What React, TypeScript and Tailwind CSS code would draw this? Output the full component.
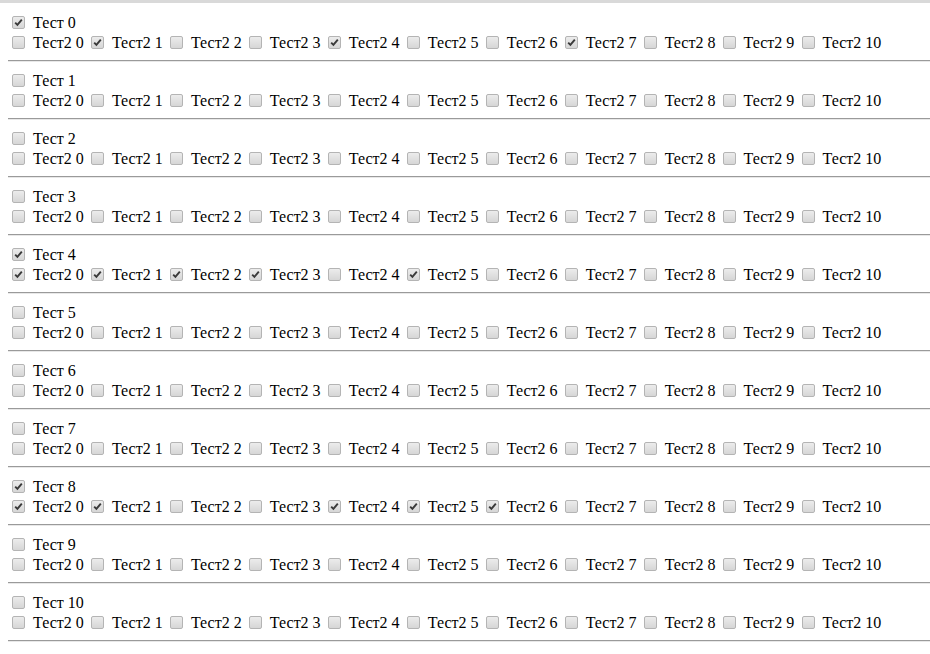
const GROUPS = Array.from({ length: 11 }, (_, i) => i);
const SUBS = Array.from({ length: 11 }, (_, i) => i);

const checkedSubs: Record<number, number[]> = {
  0: [1, 4, 7],
  4: [0, 1, 2, 3, 5],
  8: [0, 1, 4, 5, 6],
};

function Box({ checked }: { checked: boolean }) {
  return (
    <span className="inline-flex h-[13px] w-[13px] shrink-0 items-center justify-center rounded-[2px] border border-[#b4b4b4] bg-gradient-to-b from-[#ececec] to-[#d6d6d6]">
      {checked && (
        <svg width="9" height="9" viewBox="0 0 9 9">
          <path d="M1.2 4.6 L3.4 6.9 L7.8 1.6" fill="none" stroke="#3a3a3a" strokeWidth="1.9" />
        </svg>
      )}
    </span>
  );
}

function Item({ label, checked }: { label: string; checked: boolean }) {
  return (
    <span className="inline-flex h-5 items-center">
      <span className="ml-1 mr-2 flex">
        <Box checked={checked} />
      </span>
      <span className="mr-[3.2px] translate-y-px whitespace-pre">{label}</span>
    </span>
  );
}

export default function App() {
  return (
    <div className="min-h-[654px] border-t-[3px] border-[#d9d9d9] bg-white pl-2 pt-[9px] font-['Liberation_Serif',serif] text-[16px] leading-5 text-black">
      {GROUPS.map((g) => {
        const subs = checkedSubs[g] ?? [];
        return (
          <div key={g}>
            <div className="flex">
              <Item label={`Тест ${g}`} checked={subs.length > 0} />
            </div>
            <div className="flex whitespace-nowrap">
              {SUBS.map((s) => (
                <Item key={s} label={`Тест2 ${s}`} checked={subs.includes(s)} />
              ))}
            </div>
            <div className="my-2 border-t border-b border-t-[#9a9a9a] border-b-[#e8e8e8]" />
          </div>
        );
      })}
    </div>
  );
}
